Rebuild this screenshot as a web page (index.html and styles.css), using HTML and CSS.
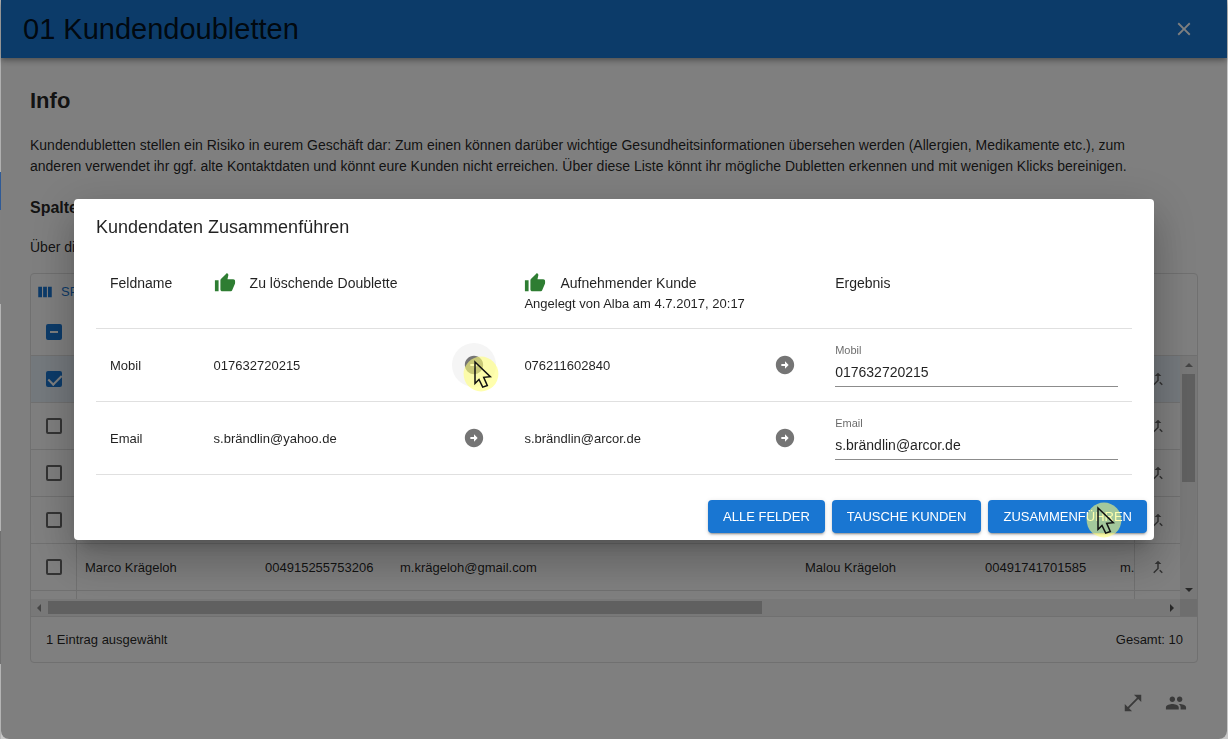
FILE: index.html
```html
<!DOCTYPE html>
<html lang="de">
<head>
<meta charset="utf-8">
<meta name="viewport" content="width=device-width, initial-scale=1">
<title>Kundendoubletten</title>
<link rel="stylesheet" href="styles.css">
</head>
<body>
<svg class="symbols" aria-hidden="true">
  <symbol id="close" viewBox="0 0 24 24"><path d="M19 6.41 17.59 5 12 10.59 6.41 5 5 6.41 10.59 12 5 17.59 6.41 19 12 13.41 17.59 19 19 17.59 13.41 12z"/></symbol>
  <symbol id="merge" viewBox="0 0 24 24"><path d="M17 20.41 18.41 19 15 15.59 13.59 17 17 20.41zM7.5 8H11v5.59L5.59 19 7 20.41l6-6V8h3.5L12 3.5 7.5 8z"/></symbol>
  <symbol id="columns" viewBox="0 0 24 24"><path d="M3 5h5v14H3zM9.500 5h5v14h-5zM16 5h5v14h-5z"/></symbol>
  <symbol id="expand" viewBox="0 0 24 24"><path d="M21 11V3h-8l3.29 3.29-10 10L3 13v8h8l-3.29-3.29 10-10z"/></symbol>
  <symbol id="people" viewBox="0 0 24 24"><path d="M16 11c1.66 0 2.99-1.34 2.99-3S17.66 5 16 5c-1.66 0-3 1.34-3 3s1.34 3 3 3zm-8 0c1.66 0 2.99-1.34 2.99-3S9.66 5 8 5C6.34 5 5 6.34 5 8s1.34 3 3 3zm0 2c-2.33 0-7 1.17-7 3.5V19h14v-2.5c0-2.33-4.67-3.5-7-3.5zm8 0c-.29 0-.62.02-.97.05 1.16.84 1.97 1.97 1.97 3.45V19h6v-2.5c0-2.33-4.67-3.5-7-3.5z"/></symbol>
  <symbol id="thumb" viewBox="0 0 24 24"><path d="M1 21h4V9H1v12zm22-11c0-1.1-.9-2-2-2h-6.31l.95-4.57.03-.32c0-.41-.17-.79-.44-1.06L14.17 1 7.59 7.59C7.22 7.95 7 8.45 7 9v10c0 1.1.9 2 2 2h9c.83 0 1.54-.5 1.84-1.22l3.02-7.05c.09-.23.14-.47.14-.73v-2z"/></symbol>
  <symbol id="arrow" viewBox="0 0 24 24"><path d="M22 12c0-5.52-4.48-10-10-10S2 6.48 2 12s4.48 10 10 10 10-4.48 10-10zm-10 1H8v-2h4V8l4 4-4 4v-3z"/></symbol>
  <symbol id="pointer" viewBox="0 0 36 36"><circle cx="18" cy="18" r="17.4" fill="#ffff78" fill-opacity=".6"/><path d="M12 6l15.3 14.7-6.6.6 3.6 8.2-4.6 1.6-3.7-7.6-4 4z" fill="none" stroke="#111" stroke-width="1.5"/></symbol>
</svg>

<div class="app">
  <header class="topbar">
    <h1 class="topbar-title">01 Kundendoubletten</h1>
    <button class="icon-button topbar-close" type="button" aria-label="Schließen"><svg class="icon"><use href="#close"/></svg></button>
  </header>

  <main class="content">
    <h2 class="info-title">Info</h2>
    <p class="text">Kundendubletten stellen ein Risiko in eurem Geschäft dar: Zum einen können darüber wichtige Gesundheitsinformationen übersehen werden (Allergien, Medikamente etc.), zum<br>anderen verwendet ihr ggf. alte Kontaktdaten und könnt eure Kunden nicht erreichen. Über diese Liste könnt ihr mögliche Dubletten erkennen und mit wenigen Klicks bereinigen.</p>
    <h3 class="section-title">Spalten</h3>
    <p class="text section-text">Über die</p>

    <section class="grid">
      <div class="grid-toolbar">
        <button class="columns-button" type="button"><svg class="icon-small"><use href="#columns"/></svg>SPALTEN</button>
      </div>
      <div class="grid-main">
        <table class="grid-table">
          <colgroup><col class="col-check"><col class="col-name"><col class="col-phone"><col class="col-mail"><col class="col-name"><col class="col-phone"><col><col class="col-check"></colgroup>
          <thead>
            <tr><th><input class="check check-some" type="checkbox" aria-label="Alle auswählen"></th><th></th><th></th><th></th><th></th><th></th><th></th><th></th></tr>
          </thead>
          <tbody>
            <tr class="selected"><td><input class="check" type="checkbox" aria-label="Zeile 1" checked></td><td></td><td></td><td></td><td></td><td></td><td></td><td><svg class="icon-merge"><use href="#merge"/></svg></td></tr>
            <tr><td><input class="check" type="checkbox" aria-label="Zeile 2"></td><td></td><td></td><td></td><td></td><td></td><td></td><td><svg class="icon-merge"><use href="#merge"/></svg></td></tr>
            <tr><td><input class="check" type="checkbox" aria-label="Zeile 3"></td><td></td><td></td><td></td><td></td><td></td><td></td><td><svg class="icon-merge"><use href="#merge"/></svg></td></tr>
            <tr><td><input class="check" type="checkbox" aria-label="Zeile 4"></td><td></td><td></td><td></td><td></td><td></td><td></td><td><svg class="icon-merge"><use href="#merge"/></svg></td></tr>
            <tr><td><input class="check" type="checkbox" aria-label="Zeile 5"></td><td>Marco Krägeloh</td><td>004915255753206</td><td>m.krägeloh@gmail.com</td><td>Malou Krägeloh</td><td>00491741701585</td><td>m.</td><td><svg class="icon-merge"><use href="#merge"/></svg></td></tr>
            <tr><td></td><td></td><td></td><td></td><td></td><td></td><td></td><td></td></tr>
          </tbody>
        </table>
        <div class="side">
          <div class="side-head"></div>
          <div class="vscroll"><i class="tri up"></i><i class="vthumb"></i><i class="tri down"></i></div>
        </div>
      </div>
      <div class="hscroll-row">
        <div class="hscroll"><i class="tri left"></i><div class="htrack"><i class="hthumb"></i></div><i class="tri right"></i></div>
        <div class="corner"></div>
      </div>
      <footer class="grid-footer"><span>1 Eintrag ausgewählt</span><span>Gesamt: 10</span></footer>
    </section>
  </main>

  <div class="bottom-actions">
    <button class="icon-button" type="button" aria-label="Vergrößern"><svg class="icon"><use href="#expand"/></svg></button>
    <button class="icon-button" type="button" aria-label="Kunden"><svg class="icon"><use href="#people"/></svg></button>
  </div>
</div>

<div class="backdrop">
  <div class="dialog" role="dialog" aria-labelledby="dialog-title">
    <h2 class="dialog-title" id="dialog-title">Kundendaten Zusammenführen</h2>
    <div class="dialog-body">
      <table class="merge-table">
        <colgroup><col class="col-field"><col class="col-value"><col class="col-value"><col class="col-value"></colgroup>
        <thead>
          <tr>
            <th>Feldname</th>
            <th><div class="head-line"><svg class="icon thumb"><use href="#thumb"/></svg>Zu löschende Doublette</div></th>
            <th><div class="head-line"><svg class="icon thumb"><use href="#thumb"/></svg>Aufnehmender Kunde</div><div class="head-sub">Angelegt von Alba am 4.7.2017, 20:17</div></th>
            <th>Ergebnis</th>
          </tr>
        </thead>
        <tbody>
          <tr>
            <td>Mobil</td>
            <td><div class="value">017632720215<button class="icon-button round hovered" type="button" aria-label="Übernehmen"><svg class="icon"><use href="#arrow"/></svg><svg class="pointer pointer-small"><use href="#pointer"/></svg></button></div></td>
            <td><div class="value">076211602840<button class="icon-button round" type="button" aria-label="Übernehmen"><svg class="icon"><use href="#arrow"/></svg></button></div></td>
            <td><div class="field"><label class="field-label" for="mobil">Mobil</label><input class="field-input" id="mobil" type="text" value="017632720215"></div></td>
          </tr>
          <tr>
            <td>Email</td>
            <td><div class="value">s.brändlin@yahoo.de<button class="icon-button round" type="button" aria-label="Übernehmen"><svg class="icon"><use href="#arrow"/></svg></button></div></td>
            <td><div class="value">s.brändlin@arcor.de<button class="icon-button round" type="button" aria-label="Übernehmen"><svg class="icon"><use href="#arrow"/></svg></button></div></td>
            <td><div class="field"><label class="field-label" for="email">Email</label><input class="field-input" id="email" type="text" value="s.brändlin@arcor.de"></div></td>
          </tr>
        </tbody>
      </table>
    </div>
    <div class="dialog-actions">
      <button class="button" type="button">ALLE FELDER</button>
      <button class="button" type="button">TAUSCHE KUNDEN</button>
      <button class="button" type="button">ZUSAMMENFÜHREN<svg class="pointer pointer-button"><use href="#pointer"/></svg></button>
    </div>
  </div>
</div>
</body>
</html>
```
FILE: styles.css
```css
* { box-sizing: border-box; }

body {
  margin: 0;
  min-height: 100vh;
  padding: 0 1px;
  background: linear-gradient(#b0b0b0 172px, #2f5a96 172px, #2f5a96 210px, #808080 210px, #808080 304px, #b4b4b4 304px, #b4b4b4 531px, #707070 531px, #707070 664px, #b4b4b4 664px) left / 1px 100% no-repeat, #c8c8c8;
  font-family: "Liberation Sans", Arial, sans-serif;
  font-size: 13px;
  color: rgba(0, 0, 0, .87);
}

h1, h2, h3, p { margin: 0; }
button, input { font-family: inherit; }
.symbols { position: absolute; width: 0; height: 0; }

.icon { display: block; width: 22px; height: 22px; fill: currentColor; }
.icon-button {
  display: flex;
  padding: 0;
  border: 0;
  background: none;
  color: #757575;
}

/* Page */
.app {
  display: flex;
  flex-direction: column;
  min-height: 100vh;
  background: #fff;
  border-radius: 0 0 8px 8px;
}
.topbar {
  display: flex;
  align-items: center;
  justify-content: space-between;
  height: 58px;
  padding: 0 32px 0 22px;
  background: #1976d2;
  box-shadow: 0 2px 4px -1px rgba(0, 0, 0, .2), 0 4px 5px rgba(0, 0, 0, .14), 0 1px 10px rgba(0, 0, 0, .12);
}
.topbar-title { font-size: 29px; font-weight: 400; line-height: 40px; }
.topbar-close { color: #fff; }

.content { padding: 29px 29px 0; }
.info-title { margin-bottom: 20px; font-size: 22px; line-height: 28px; }
.text { font-size: 14px; line-height: 21px; }
.section-title { margin: 20px 0 18px; font-size: 16px; line-height: 22px; }

.grid {
  margin-top: 15px;
  border: 1px solid #e0e0e0;
  border-radius: 4px;
}
.grid-toolbar { display: flex; align-items: center; height: 35px; padding: 0 5px; }
.columns-button {
  display: flex;
  align-items: center;
  gap: 7px;
  padding: 0;
  border: 0;
  background: none;
  color: #1976d2;
  font-size: 13px;
}
.icon-small { width: 18px; height: 18px; fill: currentColor; }

.grid-main { display: flex; height: 290px; overflow: hidden; }
.grid-table { flex: 1; align-self: flex-start; width: 0; table-layout: fixed; border-collapse: separate; border-spacing: 0; }
.grid-table th, .grid-table td {
  height: 47px;
  padding: 0 0 0 8px;
  border-bottom: 1px solid #e0e0e0;
  text-align: left;
  white-space: nowrap;
}
.grid-table th:first-child, .grid-table td:first-child,
.grid-table td:last-child { padding: 0; text-align: center; }
.grid-table td:first-child { border-right: 1px solid #e0e0e0; }
.grid-table td:last-child { border-left: 1px solid #e0e0e0; }
.selected { background: #e9f2fa; }
.col-check { width: 46px; }
.col-name { width: 180px; }
.col-phone { width: 135px; }
.col-mail { width: 405px; }
.icon-merge { display: block; width: 18px; height: 18px; margin: 0 auto; fill: #666; }

.check {
  display: block;
  position: relative;
  width: 16px;
  height: 16px;
  margin: 0 auto;
  appearance: none;
  border: 2px solid #666;
  border-radius: 2px;
}
.check:checked, .check-some { border-color: #1976d2; background: #1976d2; }
.check:checked::before {
  content: "";
  position: absolute;
  left: 3px;
  top: -1px;
  width: 6px;
  height: 11px;
  border: solid #fff;
  border-width: 0 2px 2px 0;
  transform: rotate(45deg);
}
.check-some::before {
  content: "";
  position: absolute;
  left: 2px;
  right: 2px;
  top: 5px;
  height: 2px;
  background: #fff;
}

.side { display: flex; flex-direction: column; width: 17px; }
.side-head { height: 47px; border-bottom: 1px solid #e0e0e0; }
.vscroll {
  flex: 1;
  display: flex;
  flex-direction: column;
  align-items: center;
  padding: 7px 0;
  background: #f1f1f1;
}
.vthumb { width: 13px; height: 108px; margin-top: 7px; background: #c1c1c1; }
.tri { border: 4px solid transparent; }
.up { border-top: 0; border-bottom-color: #8a8a8a; }
.down { margin-top: auto; border-bottom: 0; border-top-color: #505050; }
.left { border-left: 0; border-right-color: #8a8a8a; }
.right { border-right: 0; border-left-color: #505050; }
.hscroll-row { display: flex; height: 17px; }
.hscroll { flex: 1; display: flex; align-items: center; gap: 7px; padding: 0 6px; background: #f1f1f1; }
.htrack { flex: 1; }
.hthumb { display: block; width: 64%; height: 13px; background: #c1c1c1; }
.corner { width: 17px; background: #dcdcdc; }
.grid-footer {
  display: flex;
  align-items: center;
  justify-content: space-between;
  height: 46px;
  padding: 0 14px 0 15px;
  border-top: 1px solid #e0e0e0;
}

.bottom-actions { display: flex; justify-content: flex-end; gap: 21px; padding: 29px 40px 25px; }

/* Dialog */
.backdrop {
  position: fixed;
  inset: 0 1px;
  display: flex;
  align-items: center;
  justify-content: center;
  padding: 0 32px;
  background: rgba(0, 0, 0, .5);
  border-radius: 0 0 8px 8px;
}
.dialog {
  width: 100%;
  max-width: 1080px;
  background: #fff;
  border-radius: 4px;
  box-shadow: 0 11px 15px -7px rgba(0, 0, 0, .2), 0 24px 38px 3px rgba(0, 0, 0, .14), 0 9px 46px 8px rgba(0, 0, 0, .12);
}
.dialog-title { padding: 14px 22px 17px; font-size: 18px; font-weight: 400; line-height: 28px; }
.dialog-body { padding: 0 22px; }
.merge-table { width: 100%; table-layout: fixed; border-collapse: separate; border-spacing: 0; }
.merge-table th {
  height: 71px;
  padding: 14px;
  border-bottom: 1px solid #e0e0e0;
  font-size: 14px;
  font-weight: 400;
  line-height: 22px;
  text-align: left;
  vertical-align: top;
}
.merge-table td { padding: 14px; border-bottom: 1px solid #e0e0e0; }
.col-field { width: 10%; }
.col-value { width: 30%; }
.head-line { display: flex; align-items: center; gap: 14px; }
.head-sub { font-size: 13px; line-height: 20px; }
.thumb { color: #2e7d32; }
.value { display: flex; align-items: center; justify-content: space-between; }
.round { position: relative; padding: 11px; border-radius: 50%; }
.hovered { background: #f5f5f5; }
.field { display: flex; flex-direction: column; }
.field-label { color: rgba(0, 0, 0, .6); font-size: 11px; line-height: 14px; }
.field-input {
  width: 100%;
  height: 30px;
  padding: 0;
  border: 0;
  border-bottom: 1px solid #8c8c8c;
  outline: 0;
  background: none;
  color: inherit;
  font-size: 14px;
}
.dialog-actions { display: flex; justify-content: flex-end; gap: 7px; padding: 25px 7px 7px; }
.button {
  position: relative;
  height: 33px;
  padding: 0 15px;
  border: 0;
  border-radius: 4px;
  background: #1976d2;
  color: #fff;
  font-size: 13px;
  font-weight: 500;
  box-shadow: 0 3px 1px -2px rgba(0, 0, 0, .2), 0 2px 2px rgba(0, 0, 0, .14), 0 1px 5px rgba(0, 0, 0, .12);
}
.pointer { position: absolute; width: 36px; height: 36px; }
.pointer-small { left: 11px; top: 13px; }
.pointer-button { right: 25px; top: 2px; }
```
